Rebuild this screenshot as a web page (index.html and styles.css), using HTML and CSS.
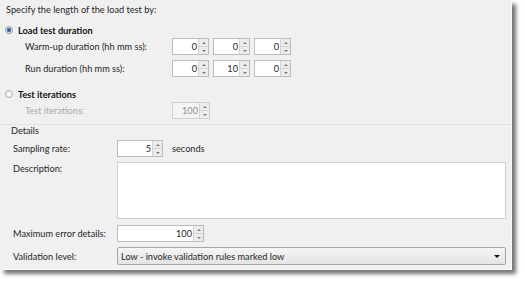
FILE: index.html
```html
<!DOCTYPE html>
<html>
<head>
<meta charset="utf-8">
<link rel="stylesheet" href="styles.css">
</head>
<body>
<div class="panel">
  <div class="intro">Specify the length of the load test by:</div>

  <div class="radio-row first"><span class="radio checked"></span><span class="bold">Load test duration</span></div>
  <div class="field warm">
    <span class="label">Warm-up duration (hh mm ss):</span>
    <div class="spins">
      <span class="spin w37"><span class="val">0</span><span class="btns"><i class="up"></i><i class="dn"></i></span></span>
      <span class="spin w37"><span class="val">0</span><span class="btns"><i class="up"></i><i class="dn"></i></span></span>
      <span class="spin w37"><span class="val">0</span><span class="btns"><i class="up"></i><i class="dn"></i></span></span>
    </div>
  </div>
  <div class="field run">
    <span class="label">Run duration (hh mm ss):</span>
    <div class="spins">
      <span class="spin w37"><span class="val">0</span><span class="btns"><i class="up"></i><i class="dn"></i></span></span>
      <span class="spin w37"><span class="val">10</span><span class="btns"><i class="up"></i><i class="dn"></i></span></span>
      <span class="spin w37"><span class="val">0</span><span class="btns"><i class="up"></i><i class="dn"></i></span></span>
    </div>
  </div>

  <div class="radio-row second"><span class="radio"></span><span class="bold">Test iterations</span></div>
  <div class="field iter disabled">
    <span class="label">Test iterations:</span>
    <div class="spins">
      <span class="spin w38 off"><span class="val">100</span><span class="btns"><i class="up"></i><i class="dn"></i></span></span>
    </div>
  </div>

  <div class="details">
    <div class="details-title">Details</div>
    <div class="drow sampling">
      <span class="dlabel">Sampling rate:</span>
      <div class="dctrl">
        <span class="spin w46"><span class="val">5</span><span class="btns"><i class="up"></i><i class="dn"></i></span></span>
        <span class="unit">seconds</span>
      </div>
    </div>
    <div class="drow desc">
      <span class="dlabel top">Description:</span>
      <div class="dctrl"><div class="textarea"></div></div>
    </div>
    <div class="drow maxerr">
      <span class="dlabel">Maximum error details:</span>
      <div class="dctrl">
        <span class="spin w87"><span class="val">100</span><span class="btns"><i class="up"></i><i class="dn"></i></span></span>
      </div>
    </div>
    <div class="drow valid">
      <span class="dlabel">Validation level:</span>
      <div class="dctrl">
        <div class="combo"><span class="ctext">Low - invoke validation rules marked low</span><span class="carrow"></span></div>
      </div>
    </div>
  </div>
</div>
</body>
</html>
```

FILE: styles.css
```css
html, body {
  margin: 0;
  padding: 0;
  background: #ffffff;
}
body {
  width: 526px;
  height: 284px;
  overflow: hidden;
  font-family: Lato, "Noto Sans", sans-serif;
  font-size: 9.2px;
  color: #262626;
  white-space: nowrap;
}
.panel {
  width: 512px;
  height: 270px;
  box-sizing: border-box;
  background: #f0f0f0;
  border-right: 1px solid #fafafa;
  border-bottom: 1px solid #fafafa;
  box-shadow: 4px 4px 4px rgba(0,0,0,0.55);
  display: flex;
  flex-direction: column;
}
.intro {
  height: 20px;
  line-height: 20px;
  padding-left: 6px;
}
.radio-row {
  height: 16px;
  display: flex;
  align-items: center;
  padding-left: 5px;
}
.radio-row.first { margin-top: 2px; }
.radio-row.second { margin-top: 9px; }
.bold {
  font-weight: bold;
  margin-left: 5px;
  color: #111;
}
.radio {
  width: 8px;
  height: 8px;
  box-sizing: border-box;
  border-radius: 50%;
  border: 1px solid #b0b0b0;
  background: radial-gradient(circle, #ffffff 0, #e6e6e6 100%);
}
.radio.checked {
  border-color: #8a9bb3;
  background: radial-gradient(circle, #2a4d7a 0, #4d7aae 45%, #dfe8f2 60%, #f4f7fb 100%);
}
.field {
  height: 17px;
  display: grid;
  grid-template-columns: 147px auto;
  padding-left: 25px;
  align-items: center;
}
.field.run { margin-top: 5px; }
.field.iter { margin-top: 0; }
.field.disabled .label { color: #a8a8a8; }
.spins {
  display: flex;
  gap: 4px;
}
.spin {
  height: 17px;
  box-sizing: border-box;
  display: inline-flex;
  border: 1px solid #bcbcbc;
  background: #ffffff;
}
.spin.w37 { width: 37px; }
.spin.w38 { width: 38px; }
.spin.w46 { width: 46px; }
.spin.w87 { width: 87px; }
.spin.off { background: #f4f4f4; border-color: #d0d0d0; }
.spin.off .val { color: #8e8e8e; }
.val {
  flex: 1;
  text-align: right;
  line-height: 15px;
  padding-right: 1px;
}
.btns {
  width: 9px;
  display: flex;
  flex-direction: column;
  border-left: 1px solid #d4d4d4;
  background: #ececec;
}
.btns i {
  flex: 1;
  display: flex;
  align-items: center;
  justify-content: center;
}
.btns i.up { border-bottom: 1px solid #d4d4d4; }
.btns i.up::before {
  content: "";
  border-left: 2px solid transparent;
  border-right: 2px solid transparent;
  border-bottom: 2px solid #7a7a7a;
}
.btns i.dn::before {
  content: "";
  border-left: 2px solid transparent;
  border-right: 2px solid transparent;
  border-top: 2px solid #7a7a7a;
}
.details {
  margin-top: 5px;
  border-top: 1px solid #e2e2e2;
  display: flex;
  flex-direction: column;
}
.details-title {
  height: 12px;
  line-height: 12px;
  padding-left: 11px;
}
.drow {
  display: grid;
  grid-template-columns: 104px 389px;
  padding-left: 13px;
  align-items: center;
}
.drow.sampling { height: 17px; margin-top: 3px; }
.drow.desc { height: 57px; margin-top: 5px; align-items: start; }
.drow.maxerr { height: 17px; margin-top: 6px; }
.drow.valid { height: 18px; margin-top: 5px; }
.dlabel.top { line-height: 12px; padding-top: 1px; }
.dctrl {
  display: flex;
  align-items: center;
}
.unit { margin-left: 9px; }
.textarea {
  width: 389px;
  height: 57px;
  box-sizing: border-box;
  border: 1px solid #cfcfcf;
  background: #ffffff;
}
.combo {
  width: 389px;
  height: 18px;
  box-sizing: border-box;
  border: 1px solid #a6a6a6;
  border-radius: 2px;
  background: linear-gradient(#f5f5f5, #e4e4e4);
  display: flex;
  align-items: center;
  justify-content: space-between;
  padding: 0 5px 0 3px;
}
.carrow {
  width: 0;
  height: 0;
  border-left: 3px solid transparent;
  border-right: 3px solid transparent;
  border-top: 3px solid #111;
}
```
